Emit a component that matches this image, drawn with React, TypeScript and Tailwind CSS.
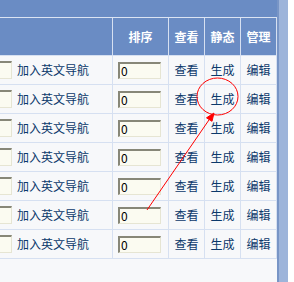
import React from "react";

const rows = [0, 1, 2, 3, 4, 5, 6];

const cellBorder = "border-r border-[#d6e0f1]";

function SortInput() {
  return (
    <div className="w-[43px] h-[17px] bg-[#fbfbf1] border-t-2 border-l-2 border-b border-r border-t-[#878778] border-l-[#878778] border-b-[#e6e5d3] border-r-[#e6e5d3] flex items-center pl-[1px] text-[12px] leading-none text-black">
      0
    </div>
  );
}

function Row() {
  return (
    <div className="flex h-[29px] border-b border-[#d6e0f1] bg-[#f7f8fa] text-[12px] text-[#0b396b]">
      <div className={`w-[113px] flex items-center ${cellBorder}`}>
        <div className="w-[12px] h-[18px] bg-[#fbfbf1] border-t-2 border-b border-r border-t-[#878778] border-b-[#e6e5d3] border-r-[#e6e5d3]" />
        <span className="ml-[5px]">加入英文导航</span>
      </div>
      <div className={`w-[56px] flex items-center pl-[5px] ${cellBorder}`}>
        <SortInput />
      </div>
      <div className={`w-[36px] flex items-center justify-center ${cellBorder}`}>查看</div>
      <div className={`w-[36px] flex items-center justify-center ${cellBorder}`}>生成</div>
      <div className={`w-[36px] flex items-center justify-center ${cellBorder}`}>编辑</div>
    </div>
  );
}

export default function App() {
  return (
    <div
      className="relative w-[294px] h-[282px] overflow-hidden flex bg-white"
      style={{ fontFamily: '"Noto Sans CJK SC", "Liberation Sans", sans-serif' }}
    >
      <div className="w-[277px] flex flex-col bg-[#f7f8fa]">
        <div className="h-[17px] bg-[#6a8cc4]" />
        <div className="h-[1px] bg-[#dbe4f3]" />
        <div className="flex h-[38px] bg-[#6a8cc4] border-b border-[#d6e0f1] text-[12px] font-bold text-white">
          <div className={`w-[113px] ${cellBorder}`} />
          <div className={`w-[56px] flex items-center justify-center ${cellBorder}`}>排序</div>
          <div className={`w-[36px] flex items-center justify-center ${cellBorder}`}>查看</div>
          <div className={`w-[36px] flex items-center justify-center ${cellBorder}`}>静态</div>
          <div className={`w-[36px] flex items-center justify-center ${cellBorder}`}>管理</div>
        </div>
        {rows.map((r) => (
          <Row key={r} />
        ))}
      </div>
      <div className="w-[2px] bg-[#7895c6]" />
      <div className="w-[9px] bg-[#9db4da]" />
      <div className="flex-1 bg-white" />

      <svg className="absolute inset-0 pointer-events-none" width="294" height="282">
        <ellipse cx="217.5" cy="96.5" rx="20.5" ry="18.5" fill="none" stroke="#ff0000" strokeWidth="1" />
        <line x1="147" y1="210" x2="211" y2="117" stroke="#ff0000" strokeWidth="1" />
        <polygon points="214,113 212,121.3 206.5,117.8" fill="#ff0000" stroke="#ff0000" strokeWidth="1" />
      </svg>
    </div>
  );
}
